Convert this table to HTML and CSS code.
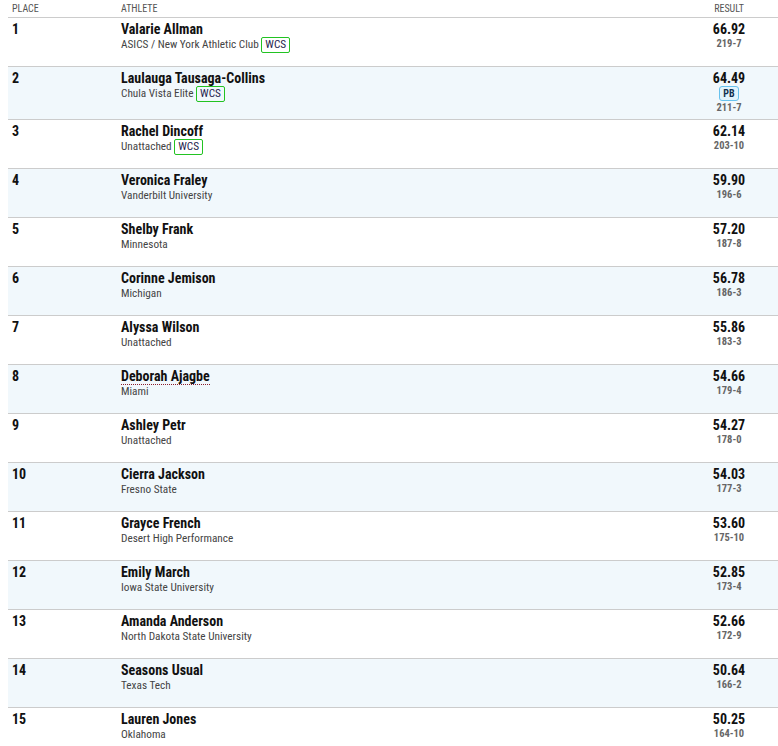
FILE: index.html
```html
<!DOCTYPE html>
<html>
<head>
<meta charset="utf-8">
<link rel="stylesheet" href="styles.css">
</head>
<body>
<table class="results">
  <colgroup>
    <col class="c-place"><col class="c-athlete"><col class="c-result"><col class="c-end">
  </colgroup>
  <thead>
    <tr><th>Place</th><th>Athlete</th><th class="res">Result</th><th></th></tr>
  </thead>
  <tbody>
    <tr><td class="place">1</td><td><div class="name">Valarie Allman</div><div class="aff">ASICS / New York Athletic Club <span class="wcs">WCS</span></div></td><td class="res"><div class="mark">66.92</div><div class="feet">219-7</div></td><td></td></tr>
    <tr><td class="place">2</td><td><div class="name">Laulauga Tausaga-Collins</div><div class="aff">Chula Vista Elite <span class="wcs">WCS</span></div></td><td class="res"><div class="mark">64.49</div><div class="pbw"><span class="pb">PB</span></div><div class="feet">211-7</div></td><td></td></tr>
    <tr><td class="place">3</td><td><div class="name">Rachel Dincoff</div><div class="aff">Unattached <span class="wcs">WCS</span></div></td><td class="res"><div class="mark">62.14</div><div class="feet">203-10</div></td><td></td></tr>
    <tr><td class="place">4</td><td><div class="name">Veronica Fraley</div><div class="aff">Vanderbilt University</div></td><td class="res"><div class="mark">59.90</div><div class="feet">196-6</div></td><td></td></tr>
    <tr><td class="place">5</td><td><div class="name">Shelby Frank</div><div class="aff">Minnesota</div></td><td class="res"><div class="mark">57.20</div><div class="feet">187-8</div></td><td></td></tr>
    <tr><td class="place">6</td><td><div class="name">Corinne Jemison</div><div class="aff">Michigan</div></td><td class="res"><div class="mark">56.78</div><div class="feet">186-3</div></td><td></td></tr>
    <tr><td class="place">7</td><td><div class="name">Alyssa Wilson</div><div class="aff">Unattached</div></td><td class="res"><div class="mark">55.86</div><div class="feet">183-3</div></td><td></td></tr>
    <tr><td class="place">8</td><td><div class="name"><span class="dotted">Deborah Ajagbe</span></div><div class="aff">Miami</div></td><td class="res"><div class="mark">54.66</div><div class="feet">179-4</div></td><td></td></tr>
    <tr><td class="place">9</td><td><div class="name">Ashley Petr</div><div class="aff">Unattached</div></td><td class="res"><div class="mark">54.27</div><div class="feet">178-0</div></td><td></td></tr>
    <tr><td class="place">10</td><td><div class="name">Cierra Jackson</div><div class="aff">Fresno State</div></td><td class="res"><div class="mark">54.03</div><div class="feet">177-3</div></td><td></td></tr>
    <tr><td class="place">11</td><td><div class="name">Grayce French</div><div class="aff">Desert High Performance</div></td><td class="res"><div class="mark">53.60</div><div class="feet">175-10</div></td><td></td></tr>
    <tr><td class="place">12</td><td><div class="name">Emily March</div><div class="aff">Iowa State University</div></td><td class="res"><div class="mark">52.85</div><div class="feet">173-4</div></td><td></td></tr>
    <tr><td class="place">13</td><td><div class="name">Amanda Anderson</div><div class="aff">North Dakota State University</div></td><td class="res"><div class="mark">52.66</div><div class="feet">172-9</div></td><td></td></tr>
    <tr><td class="place">14</td><td><div class="name">Seasons Usual</div><div class="aff">Texas Tech</div></td><td class="res"><div class="mark">50.64</div><div class="feet">166-2</div></td><td></td></tr>
    <tr><td class="place">15</td><td><div class="name">Lauren Jones</div><div class="aff">Oklahoma</div></td><td class="res"><div class="mark">50.25</div><div class="feet">164-10</div></td><td></td></tr>
  </tbody>
</table>
</body>
</html>
```
FILE: styles.css
```css
html, body {
  margin: 0;
  padding: 0;
  background: #fff;
}
body {
  padding-left: 8px;
  font-family: "Roboto Condensed", "Roboto", "Liberation Sans", sans-serif;
  font-stretch: 82%;
  color: #111;
}
.results {
  width: 770px;
  border-collapse: collapse;
  table-layout: fixed;
}
.c-place { width: 109px; }
.c-result { width: 66px; }
.c-end { width: 16px; }
.results th {
  height: 17px;
  padding: 0 4px;
  font-size: 10px;
  font-weight: 400;
  text-transform: uppercase;
  color: #555;
  text-align: left;
  vertical-align: middle;
  line-height: 16px;
  border-bottom: 1px solid #ccc;
}
.results th.res { text-align: center; }
.results tbody tr {
  height: 49px;
  border-bottom: 1px solid #ccc;
}
.results tbody tr:nth-child(even) { background: #f1f8fc; }
.results td {
  padding: 3px 4px 4px;
  vertical-align: top;
}
.place {
  font-size: 14px;
  font-weight: 700;
  line-height: 16px;
}
.name {
  font-size: 14px;
  font-weight: 700;
  line-height: 16px;
}
.dotted {
  border-bottom: 1px dotted #8b1d2c;
}
.aff {
  font-size: 11.25px;
  line-height: 16px;
  color: #444;
  margin-top: 0;
}
.wcs {
  display: inline-block;
  border: 1px solid #22c322;
  border-radius: 2px;
  color: #1d1d4d;
  padding: 0 3px;
  line-height: 14px;
  font-size: 11.25px;
}
.res { text-align: center; }
.mark {
  font-size: 14px;
  font-weight: 700;
  line-height: 16px;
}
.feet {
  font-size: 10.5px;
  font-weight: 700;
  line-height: 14px;
  color: #666;
}
.pbw { line-height: 15px; height: 15px; }
.pb {
  display: inline-block;
  box-sizing: border-box;
  height: 15px;
  padding: 0 3px;
  border: 1px solid #67c2ee;
  background: #e2f3fc;
  border-radius: 3px;
  font-size: 10px;
  font-weight: 700;
  line-height: 13px;
  color: #12304f;
  vertical-align: top;
}
```
